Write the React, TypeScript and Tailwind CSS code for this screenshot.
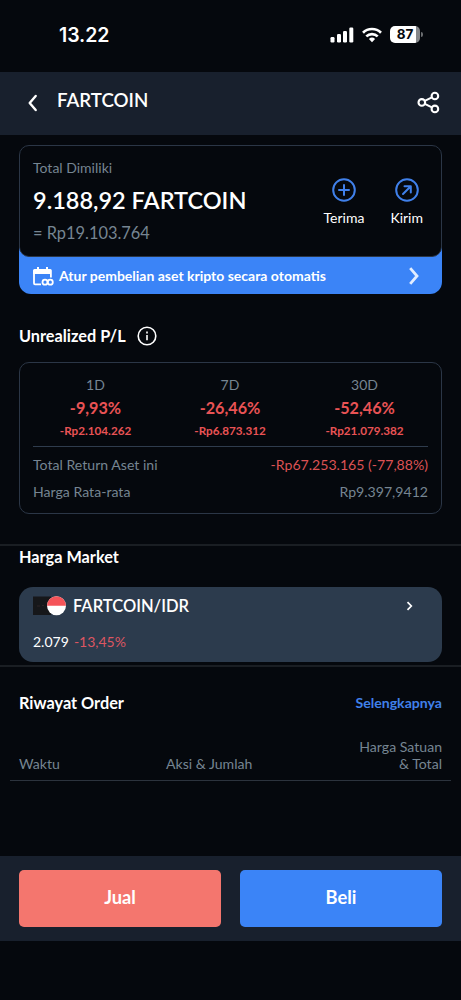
import type { ReactNode } from 'react';

interface Period {
  label: string;
  percent: string;
  amount: string;
}

interface ActionProps {
  label: string;
  children: ReactNode;
}

const periods: Period[] = [
  { label: '1D', percent: '-9,93%', amount: '-Rp2.104.262' },
  { label: '7D', percent: '-26,46%', amount: '-Rp6.873.312' },
  { label: '30D', percent: '-52,46%', amount: '-Rp21.079.382' },
];

function StatusBar() {
  return (
    <div className="flex h-[72px] items-start justify-between pl-[59px] pr-[38px] pt-[22px]">
      <span className="font-['Inter',sans-serif] text-[19.5px] font-semibold leading-[26px] tracking-[-0.1px]">13.22</span>
      <div className="flex h-[25px] items-center gap-[8px]">
        <svg width="24" height="16" viewBox="0 0 24 16" fill="#fff">
          <rect x="0.5" y="10" width="4" height="5.5" rx="1.2" />
          <rect x="7" y="7" width="4" height="8.5" rx="1.2" />
          <rect x="13" y="4" width="4" height="11.5" rx="1.2" />
          <rect x="19.3" y="0.5" width="4" height="15" rx="1.2" />
        </svg>
        <svg width="20" height="16" viewBox="0 0 20 16" fill="none" stroke="#fff" strokeWidth="2.7">
          <path d="M1 5.7a12.8 12.8 0 0 1 18 0" />
          <path d="M4.3 9.4a8.2 8.2 0 0 1 11.4 0" />
          <path d="M10 15.2L6.9 12a4.5 4.5 0 0 1 6.2 0z" fill="#fff" stroke="none" />
        </svg>
        <div className="flex items-center gap-[1px]">
          <div className="flex h-[17px] w-[30px] items-center justify-center rounded-[5px] bg-linear-to-r from-white from-87% to-[#85878a] to-87% font-['Inter',sans-serif] text-[13.5px] font-bold text-[#05080d]">
            87
          </div>
          <div className="h-[5px] w-[2px] rounded-r-full bg-[#6b6d70]"></div>
        </div>
      </div>
    </div>
  );
}

function Header() {
  return (
    <div className="flex h-[63px] items-center bg-[#18202d] pl-[27px] pr-[21px]">
      <svg className="-mt-[2px]" width="12" height="18" viewBox="0 0 12 18" fill="none" stroke="#fff" strokeWidth="2.4" strokeLinecap="round" strokeLinejoin="round">
        <path d="M8.7 2L2.7 9l6 7" />
      </svg>
      <h1 className="ml-[18px] pb-[8px] text-[18.7px] font-semibold leading-6">FARTCOIN</h1>
      <svg className="-mt-[2px] ml-auto" width="23" height="23" viewBox="0 0 23 23" fill="none" stroke="#fff" strokeWidth="2.1">
        <circle cx="4.8" cy="11.4" r="3.3" />
        <circle cx="17.9" cy="5" r="3.3" />
        <circle cx="17.9" cy="17.9" r="3.3" />
        <path d="M7.8 9.9l7.1-3.5M7.8 12.9l7.1 3.5" />
      </svg>
    </div>
  );
}

function Action({ label, children }: ActionProps) {
  return (
    <button className="flex flex-col items-center gap-[6px]">
      <svg width="24" height="24" viewBox="0 0 24 24" fill="none" stroke="#4080ea" strokeWidth="2" strokeLinecap="round" strokeLinejoin="round">
        <circle cx="12" cy="12" r="10.8" />
        {children}
      </svg>
      <span className="text-[14px] leading-5">{label}</span>
    </button>
  );
}

function Balance() {
  return (
    <section className="mx-[19px] mt-[10px]">
      <div className="relative z-10 flex h-[112px] justify-between rounded-[10px] border border-[#2b3646] bg-[#05080d] pl-[13px] pr-[18px]">
        <div className="pt-[12px]">
          <p className="text-[14px] leading-5 text-[#768592]">Total Dimiliki</p>
          <p className="mt-[6px] text-[23.5px] font-semibold leading-[32px]">9.188,92 FARTCOIN</p>
          <p className="mt-[6px] text-[16.4px] leading-[22px] text-[#768592]">= Rp19.103.764</p>
        </div>
        <div className="flex items-start gap-[26px] pt-[32px]">
          <Action label="Terima">
            <path d="M12 7v10M7 12h10" />
          </Action>
          <Action label="Kirim">
            <path d="M8 16l7.5-7.5M9.5 8.2h6.3v6.3" />
          </Action>
        </div>
      </div>
      <div className="-mt-[12px] flex h-[49px] items-end rounded-b-[12px] bg-[#3b84f7] pl-[14px] pr-[22px]">
        <div className="flex h-[36px] w-full items-center">
          <svg width="21" height="19" viewBox="0 0 21 19" fill="none" stroke="#fff" strokeWidth="1.8">
            <path d="M1 6v10.3a1 1 0 0 0 1 1h6M17.9 7v3.5" />
            <path d="M0 7V3.6a1.5 1.5 0 0 1 1.5-1.5H4V0h2v2.1h7V0h2v2.1h2.3a1.5 1.5 0 0 1 1.5 1.5V7z" fill="#fff" stroke="none" />
            <circle cx="12" cy="15.2" r="2.5" />
            <circle cx="17.3" cy="15.2" r="2.5" />
          </svg>
          <span className="ml-[5px] text-[14px] font-bold leading-5">Atur pembelian aset kripto secara otomatis</span>
          <svg className="ml-auto" width="12" height="18" viewBox="0 0 12 18" fill="none" stroke="#e2edff" strokeWidth="2.8">
            <path d="M2.2 1.2L9 9l-6.8 7.8" />
          </svg>
        </div>
      </div>
    </section>
  );
}

function ProfitLoss() {
  return (
    <section className="mx-[19px] mt-[30px]">
      <div className="flex h-[24px] items-center gap-[11px]">
        <h2 className="pt-px text-[16.3px] font-bold">Unrealized P/L</h2>
        <svg width="20" height="20" viewBox="0 0 20 20" fill="none" stroke="#fff" strokeWidth="1.6">
          <circle cx="10" cy="10" r="8.8" />
          <path d="M10 9v5.2M10 5.6v1.8" />
        </svg>
      </div>
      <div className="mt-[14px] h-[152px] rounded-[10px] border border-[#2b3646] px-[13px] pt-[11px]">
        <div className="flex">
          {periods.map((p) => (
            <div key={p.label} className="flex w-[125px] flex-col items-center first:mr-[9.5px] last:ml-[9.5px]">
              <span className="text-[14px] leading-[22px] text-[#768592]">{p.label}</span>
              <span className="text-[16.2px] font-bold leading-[24px] text-[#e95355]">{p.percent}</span>
              <span className="text-[11.7px] font-bold leading-[20px] text-[#e95355]">{p.amount}</span>
            </div>
          ))}
        </div>
        <div className="mt-[6px] h-px bg-[#2f3c4d]"></div>
        <div className="mt-[5px] flex justify-between text-[14.1px] leading-[26px] text-[#768592]">
          <span>Total Return Aset ini</span>
          <span className="text-[#dc5254]">-Rp67.253.165 (-77,88%)</span>
        </div>
        <div className="mt-[1px] flex justify-between text-[14.1px] leading-[26px] text-[#768592]">
          <span>Harga Rata-rata</span>
          <span>Rp9.397,9412</span>
        </div>
      </div>
    </section>
  );
}

function Market() {
  return (
    <section className="mt-[30px] h-[123px] border-y-2 border-[#1a1e23] px-[19px]">
      <h2 className="text-[16.3px] font-bold leading-[22px]">Harga Market</h2>
      <div className="mt-[19px] h-[75px] rounded-[14px] bg-[#2c3b4d] px-[14px] pt-[8px]">
        <div className="flex h-[22px] items-center">
          <svg width="34" height="20" viewBox="0 0 34 20">
            <rect x="0" y="0.5" width="18" height="18.5" fill="#16171a" />
            <path d="M4 10h3M9 9.5h2" stroke="#2c2426" strokeWidth="1" />
            <circle cx="23.5" cy="9.7" r="9.5" fill="#fff" />
            <path d="M14 9.7a9.5 9.5 0 0 1 19 0z" fill="#f55459" />
          </svg>
          <span className="ml-[6px] pt-px text-[16.5px] font-semibold">FARTCOIN/IDR</span>
          <svg className="ml-auto mr-[15px]" width="7" height="10" viewBox="0 0 7 10" fill="none" stroke="#fff" strokeWidth="1.7">
            <path d="M1.5 1.2L5.3 5 1.5 8.8" />
          </svg>
        </div>
        <p className="mt-[15px] text-[14px] leading-5">
          2.079 <span className="ml-[1.5px] text-[#dd5662]">-13,45%</span>
        </p>
      </div>
    </section>
  );
}

function OrderHistory() {
  return (
    <section className="mt-[24px]">
      <div className="flex h-[24px] items-center justify-between px-[19px]">
        <h2 className="pt-px text-[16.3px] font-bold">Riwayat Order</h2>
        <a className="text-[14.1px] font-bold text-[#4080ea]">Selengkapnya</a>
      </div>
      <div className="mx-[10px] mt-[24px] grid h-[42px] grid-cols-[147px_1fr_100px] items-end border-b border-[#2c333d] px-[9px] pb-[8px] text-[14.1px] leading-[16.5px] text-[#768592]">
        <span>Waktu</span>
        <span>Aksi &amp; Jumlah</span>
        <span className="text-right">
          Harga Satuan
          <br />
          &amp; Total
        </span>
      </div>
    </section>
  );
}

export default function App() {
  return (
    <div className="flex h-[1000px] w-[461px] flex-col overflow-hidden bg-[#05080d] font-['Lato',sans-serif] text-white">
      <StatusBar />
      <Header />
      <Balance />
      <ProfitLoss />
      <Market />
      <OrderHistory />
      {/* tombol aksi */}
      <div className="mb-[59px] mt-auto flex h-[85px] gap-[19px] bg-[#18202d] px-[19px] pt-[14px]">
        <button className="h-[57px] flex-1 rounded-[5px] bg-[#f4766e] pb-[2px] text-[18.3px] font-bold">Jual</button>
        <button className="h-[57px] flex-1 rounded-[5px] bg-[#3b84f7] pb-[2px] text-[18.3px] font-bold">Beli</button>
      </div>
    </div>
  );
}
